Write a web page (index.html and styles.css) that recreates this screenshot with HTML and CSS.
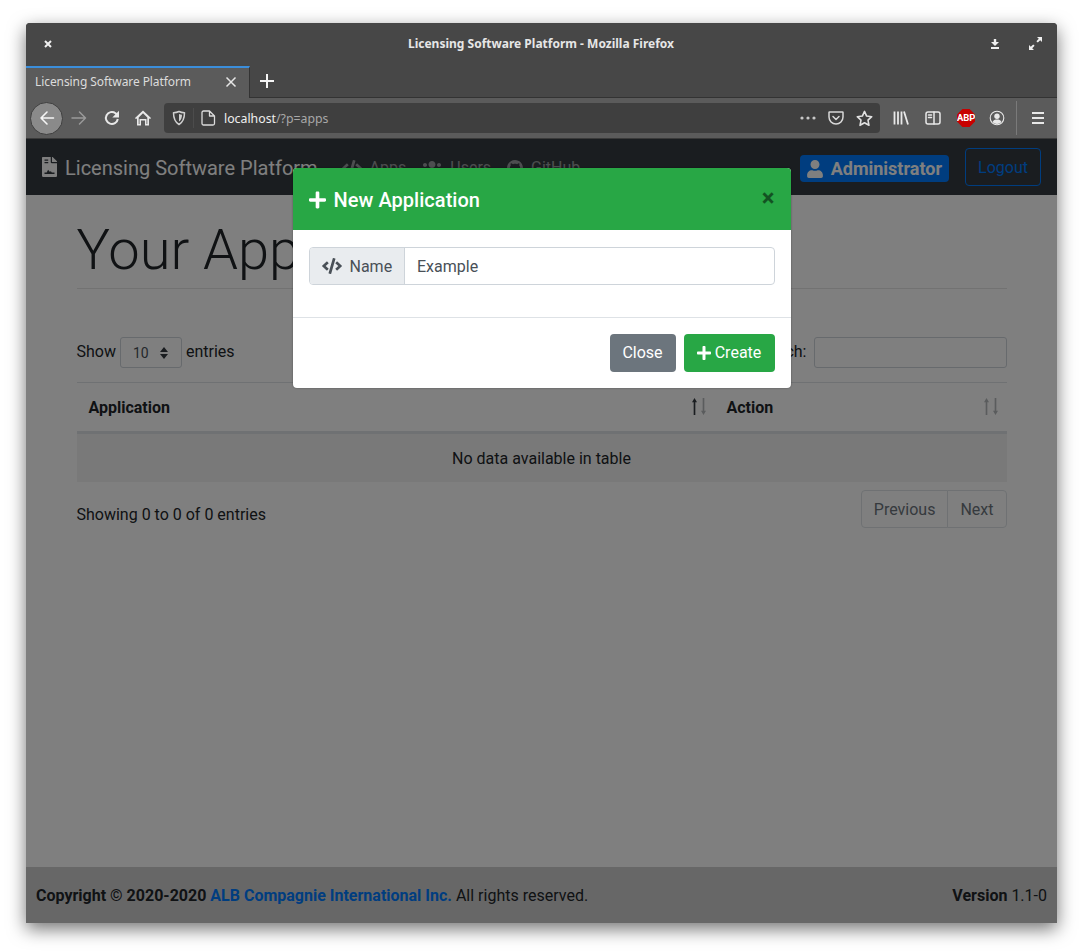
FILE: index.html
```html
<!DOCTYPE html>
<html lang="en">
<head>
<meta charset="utf-8">
<title>Licensing Software Platform</title>
<link rel="stylesheet" href="styles.css">
</head>
<body>
<div class="window">
  <div class="titlebar">
    <svg class="wm-close" viewBox="0 0 10 10"><path d="M2 2l6 6M8 2l-6 6"/></svg>
    <div class="title-text">Licensing Software Platform - Mozilla Firefox</div>
    <div class="wm-right">
      <svg class="wm-icon" viewBox="0 0 10 10"><path d="M3.800 0h2.400v3H9L5 7 1 3h2.800zM1 8h8v2H1z"/></svg>
      <svg class="wm-icon wm-max" viewBox="0 0 13 13"><path d="M8 0h5v5l-1.800-1.800-2.400 2.400-1.400-1.400 2.400-2.400zM5 13H0V8l1.800 1.800 2.400-2.400 1.400 1.400-2.400 2.400z"/></svg>
    </div>
  </div>
  <div class="tabstrip">
    <div class="tab">
      <span class="tab-label">Licensing Software Platform</span>
      <svg class="tab-close" viewBox="0 0 12 12"><path d="M1.500 1.500l9 9M10.500 1.500l-9 9"/></svg>
    </div>
    <svg class="tab-new" viewBox="0 0 14 14"><path d="M7 0v14M0 7h14"/></svg>
  </div>
  <div class="toolbar">
    <div class="back-btn"><svg class="tb-icon" viewBox="0 0 16 16"><path d="M14.500 8H2M8 2L2 8l6 6"/></svg></div>
    <svg class="tb-icon forward" viewBox="0 0 16 16"><path d="M1 8h13.500M8.500 2L14.500 8l-6 6"/></svg>
    <svg class="tb-icon reload" viewBox="0 0 16 16"><path d="M13.800 9A6 6 0 1 1 11.500 3.200L13.500 5.500"/><path class="solid" d="M15 0.800v6.700H8.300z"/></svg>
    <svg class="tb-icon home" viewBox="0 0 16 16"><path class="solid" d="M8 .5l8 7.500-1 1.200-1-.9V15.500h-4V10.500H6V15.500H2V8.300l-1 .9L0 8zM8 3.300L3.700 7.400V14H4.500V9h7V14h.8V7.400z"/></svg>
    <div class="urlbar">
      <svg class="tb-icon shield" viewBox="0 0 16 16"><path d="M8 1.500c2 1 4 1.200 5.500 1.200 0 5-1 9-5.500 11.800C3.500 11.700 2.500 7.700 2.500 2.700 4 2.700 6 2.500 8 1.500z"/><path class="solid" d="M8 4c1 .5 2 .6 3 .7 0 3-.6 5-3 6.800z"/></svg>
      <span class="url-sep"></span>
      <svg class="tb-icon page-ic" viewBox="0 0 16 16"><path d="M2 2.500a1.500 1.500 0 0 1 1.500-1.500H9.500L14.500 6v7.500a1.500 1.500 0 0 1-1.500 1.500H3.500A1.500 1.500 0 0 1 2 13.500zM9.500 1v5h5"/></svg>
      <span class="url"><span class="url-host">localhost</span>/?p=apps</span>
      <span class="url-spacer"></span>
      <svg class="tb-dots" viewBox="0 0 16 4"><circle cx="2" cy="2" r="1.600"/><circle cx="8" cy="2" r="1.600"/><circle cx="14" cy="2" r="1.600"/></svg>
      <svg class="tb-icon pocket" viewBox="0 0 16 16"><path d="M1.500 2h13a.5.500 0 0 1 .5.500V7A7 7 0 0 1 1 7V2.500a.5.500 0 0 1 .5-.5zM5 6.500l3 3 3-3"/></svg>
      <svg class="tb-icon star" viewBox="0 0 16 16"><path d="M8 1.300l2 4.400 4.800.6-3.500 3.300.9 4.800L8 12l-4.200 2.400.9-4.800L1.200 6.300 6 5.700z"/></svg>
    </div>
    <svg class="tb-icon library" viewBox="0 0 16 16"><path d="M1.500 1.500v13M5 1.500v13M8.500 1.500v13M11 1.500l4 13"/></svg>
    <svg class="tb-icon sidebar" viewBox="0 0 16 16"><rect x="1" y="2" width="14" height="12" rx="2"/><path d="M9 2v12M3.500 5h3M3.500 7.500h3"/></svg>
    <div class="abp">ABP</div>
    <svg class="tb-icon account" viewBox="0 0 16 16"><circle cx="8" cy="8" r="6.800"/><circle class="solid" cx="8" cy="6.200" r="2.700"/><path class="solid" d="M3.500 12c1-2 2.500-2.500 4.500-2.500s3.500.5 4.500 2.500c-1 1.300-2.700 2-4.500 2s-3.500-.7-4.500-2z"/></svg>
    <span class="tb-sep"></span>
    <svg class="tb-icon menu" viewBox="0 0 16 16"><path d="M2 3h12M2 8h12M2 13h12"/></svg>
  </div>
  <div class="page">
    <nav class="navbar">
      <a class="brand">
        <svg class="fa brand-ic" viewBox="0 0 384 512"><path fill-rule="evenodd" d="M224 136V0H24C10.700 0 0 10.700 0 24v464c0 13.300 10.700 24 24 24h336c13.300 0 24-10.700 24-24V160H248c-13.200 0-24-10.800-24-24zM64 72c0-4.400 3.600-8 8-8h80c4.400 0 8 3.600 8 8v16c0 4.400-3.600 8-8 8H72c-4.400 0-8-3.600-8-8zm0 64c0-4.400 3.600-8 8-8h80c4.400 0 8 3.600 8 8v16c0 4.400-3.600 8-8 8H72c-4.400 0-8-3.600-8-8zm256 296H64v-36h56l36-72 40 56 32-14 24 30h68zM377 105L279 7c-4.500-4.500-10.600-7-17-7h-6v128h128v-6.100c0-6.300-2.500-12.400-7-16.900z"/></svg>
        <span>Licensing Software Platform</span>
      </a>
      <ul class="nav-links">
        <li><svg class="fa ic-code" viewBox="0 0 640 512"><path d="M278.900 511.500l-61-17.700c-6.400-1.800-10-8.500-8.200-14.900L346.200 8.700c1.800-6.400 8.500-10 14.900-8.200l61 17.700c6.400 1.800 10 8.500 8.200 14.900L293.800 503.300c-1.900 6.400-8.500 10.100-14.900 8.200zm-114-112.200l43.500-46.400c4.600-4.900 4.300-12.700-.8-17.200L117 256l90.600-79.700c5.100-4.500 5.500-12.300.8-17.200l-43.500-46.400c-4.500-4.800-12.100-5.100-17-.5L3.800 247.200c-5.100 4.700-5.100 12.800 0 17.500l144.100 135.100c4.900 4.600 12.500 4.400 17-.5zm327.200.6l144.100-135.100c5.100-4.700 5.100-12.800 0-17.500L492.100 112.100c-4.800-4.500-12.400-4.300-17 .5L431.600 159c-4.600 4.900-4.300 12.700.8 17.200L523 256l-90.600 79.700c-5.100 4.500-5.500 12.300-.8 17.200l43.500 46.400c4.500 4.900 12.100 5.100 17 .6z"/></svg>Apps</li>
        <li><svg class="fa ic-code" viewBox="0 0 640 512"><path d="M96 224c35.300 0 64-28.700 64-64s-28.700-64-64-64-64 28.700-64 64 28.700 64 64 64zm448 0c35.300 0 64-28.700 64-64s-28.700-64-64-64-64 28.700-64 64 28.700 64 64 64zm32 32h-64c-17.600 0-33.500 7.100-45.100 18.600 40.300 22.100 68.900 62 75.100 109.400h66c17.700 0 32-14.300 32-32v-32c0-35.300-28.700-64-64-64zm-256 0c61.900 0 112-50.100 112-112S381.900 32 320 32 208 82.100 208 144s50.100 112 112 112zm76.800 32h-8.300c-20.800 10-43.900 16-68.500 16s-47.600-6-68.500-16h-8.300C179.600 288 128 339.600 128 403.200V432c0 26.500 21.500 48 48 48h288c26.500 0 48-21.500 48-48v-28.800c0-63.600-51.600-115.200-115.200-115.200zm-223.700-13.400C161.500 263.100 145.600 256 128 256H64c-35.300 0-64 28.700-64 64v32c0 17.700 14.300 32 32 32h65.900c6.300-47.400 34.900-87.300 75.200-109.400z"/></svg>Users</li>
        <li><svg class="fa ic-github" viewBox="0 0 16 16"><path d="M8 0C3.580 0 0 3.580 0 8c0 3.540 2.290 6.530 5.470 7.590.4.070.55-.17.55-.38 0-.19-.01-.82-.01-1.490-2.010.37-2.530-.49-2.690-.94-.09-.23-.48-.94-.82-1.130-.28-.15-.68-.52-.01-.53.63-.01 1.080.58 1.230.82.72 1.210 1.870.87 2.330.66.07-.52.28-.87.51-1.070-1.780-.2-3.640-.89-3.640-3.950 0-.87.31-1.590.82-2.150-.08-.2-.36-1.020.08-2.120 0 0 .67-.21 2.200.82.64-.18 1.320-.27 2-.27.68 0 1.360.09 2 .27 1.530-1.040 2.200-.82 2.200-.82.44 1.100.16 1.920.08 2.120.51.56.82 1.270.82 2.150 0 3.070-1.870 3.750-3.650 3.950.29.25.54.73.54 1.480 0 1.070-.01 1.930-.01 2.200 0 .21.15.46.55.38A8.013 8.013 0 0016 8c0-4.420-3.580-8-8-8z"/></svg>GitHub</li>
      </ul>
      <div class="nav-right">
        <span class="user-badge"><svg class="fa ic-user" viewBox="0 0 448 512"><path d="M224 256c70.700 0 128-57.300 128-128S294.700 0 224 0 96 57.300 96 128s57.300 128 128 128zm89.600 32h-16.700c-22.200 10.200-46.900 16-72.900 16s-50.600-5.800-72.900-16h-16.700C60.200 288 0 348.200 0 422.400V464c0 26.500 21.500 48 48 48h352c26.500 0 48-21.500 48-48v-41.600c0-74.200-60.200-134.400-134.400-134.400z"/></svg>Administrator</span>
        <button class="btn-logout">Logout</button>
      </div>
    </nav>
    <main class="content">
      <h1 class="page-title">Your Applications</h1>
      <hr class="rule">
      <div class="dt-top">
        <label class="dt-length"><span class="dt-word">Show</span><span class="fake-select"><span class="sel-val">10</span><svg class="updown" viewBox="0 0 8 12"><path d="M4 0l4 5H0zM4 12L0 7h8z"/></svg></span><span class="dt-word">entries</span></label>
        <label class="dt-search"><span class="dt-word">Search:</span><span class="fake-input"></span></label>
      </div>
      <table class="dt">
        <thead>
          <tr>
            <th class="col-a"><div class="th-inner"><span class="nudge">Application</span><span class="sort"><svg viewBox="0 0 6 16" preserveAspectRatio="none"><path class="on" d="M3 0l3 4H4v12H2V4H0z"/></svg><svg viewBox="0 0 6 16" preserveAspectRatio="none"><path class="off" d="M3 16l3-4H4V0H2v12H0z"/></svg></span></div></th>
            <th class="col-b"><div class="th-inner"><span class="nudge">Action</span><span class="sort"><svg viewBox="0 0 6 16" preserveAspectRatio="none"><path class="off" d="M3 0l3 4H4v12H2V4H0z"/></svg><svg viewBox="0 0 6 16" preserveAspectRatio="none"><path class="off" d="M3 16l3-4H4V0H2v12H0z"/></svg></span></div></th>
          </tr>
        </thead>
        <tbody>
          <tr><td colspan="2"><span class="nudge">No data available in table</span></td></tr>
        </tbody>
      </table>
      <div class="dt-bottom">
        <div class="dt-info">Showing 0 to 0 of 0 entries</div>
        <div class="pager"><span class="page-btn">Previous</span><span class="page-btn">Next</span></div>
      </div>
    </main>
    <footer class="footer">
      <div><b>Copyright © 2020-2020 <a class="foot-link">ALB Compagnie International Inc.</a></b> All rights reserved.</div>
      <div><b>Version</b> 1.1-0</div>
    </footer>
    <div class="backdrop">
      <div class="modal">
        <div class="modal-head">
          <h5 class="modal-title"><svg class="fa ic-plus" viewBox="0 0 448 512"><path d="M416 208H272V64c0-17.670-14.330-32-32-32h-32c-17.670 0-32 14.330-32 32v144H32c-17.670 0-32 14.330-32 32v32c0 17.670 14.330 32 32 32h144v144c0 17.670 14.330 32 32 32h32c17.670 0 32-14.330 32-32V304h144c17.670 0 32-14.330 32-32v-32c0-17.670-14.330-32-32-32z"/></svg>New Application</h5>
          <span class="modal-x">×</span>
        </div>
        <div class="modal-body">
          <div class="input-group">
            <span class="prepend"><svg class="fa ic-name" viewBox="0 0 640 512"><path d="M278.900 511.500l-61-17.700c-6.400-1.800-10-8.500-8.200-14.900L346.200 8.700c1.800-6.400 8.500-10 14.900-8.200l61 17.700c6.400 1.800 10 8.500 8.200 14.900L293.800 503.300c-1.900 6.400-8.500 10.100-14.900 8.200zm-114-112.200l43.500-46.400c4.600-4.900 4.300-12.700-.8-17.200L117 256l90.600-79.700c5.100-4.500 5.500-12.300.8-17.200l-43.500-46.400c-4.500-4.800-12.100-5.100-17-.5L3.800 247.200c-5.100 4.700-5.100 12.800 0 17.500l144.100 135.100c4.900 4.600 12.500 4.400 17-.5zm327.200.6l144.100-135.100c5.100-4.700 5.100-12.800 0-17.500L492.100 112.100c-4.800-4.500-12.400-4.300-17 .5L431.600 159c-4.600 4.900-4.300 12.700.8 17.200L523 256l-90.600 79.700c-5.100 4.500-5.500 12.300-.8 17.200l43.500 46.400c4.500 4.900 12.100 5.100 17 .6z"/></svg><span class="nudge">Name</span></span>
            <span class="name-input">Example</span>
          </div>
        </div>
        <div class="modal-foot">
          <button class="btn btn-grey">Close</button>
          <button class="btn btn-green"><svg class="fa ic-btnplus" viewBox="0 0 448 512"><path d="M416 208H272V64c0-17.670-14.330-32-32-32h-32c-17.670 0-32 14.330-32 32v144H32c-17.670 0-32 14.330-32 32v32c0 17.670 14.330 32 32 32h144v144c0 17.670 14.330 32 32 32h32c17.670 0 32-14.330 32-32V304h144c17.670 0 32-14.330 32-32v-32c0-17.670-14.330-32-32-32z"/></svg>Create</button>
        </div>
      </div>
    </div>
  </div>
</div>
</body>
</html>
```
FILE: styles.css
```css
* { box-sizing: border-box; }
html, body { margin: 0; height: 100%; background: #fff; overflow: hidden; }
body { padding: 23px 26px 29px; font-family: Roboto, "Liberation Sans", sans-serif; font-size: 16px; line-height: 1.5; color: #212529; }

.window { height: 900px; display: flex; flex-direction: column; border-radius: 4px 4px 0 0; overflow: hidden; box-shadow: 0 6px 18px rgba(0,0,0,.55); background: #474747; }

.titlebar { height: 43px; flex: none; display: flex; align-items: center; padding: 0 15px 2px 16px; background: #474747; }
.wm-close { width: 10px; height: 10px; margin-left: 1px; fill: none; stroke: #f0f0f0; stroke-width: 2; }
.title-text { flex: 1; text-align: center; color: #e6e6e6; font: 700 12px/16px "Noto Sans", sans-serif; padding-left: 39px; }
.wm-right { display: flex; align-items: center; gap: 29px; }
.wm-icon { width: 10px; height: 10px; fill: #f0f0f0; }
.wm-max { width: 13px; height: 13px; }

.tabstrip { height: 32px; flex: none; display: flex; align-items: center; background: #474747; border-bottom: 1px solid #333; }
.tab { width: 224px; height: 32px; flex: none; display: flex; align-items: center; justify-content: space-between; padding: 0 12px 2px 9px; background: #5b5b5b; border-top: 2px solid #3b8edb; border-right: 1px solid #333; }
.tab-label { color: #dcdcdc; font: 400 12px/16px "Noto Sans", sans-serif; white-space: nowrap; letter-spacing: -.08px; }
.tab-close { width: 12px; height: 12px; fill: none; stroke: #e6e6e6; stroke-width: 1.500; }
.tab-new { width: 14px; height: 14px; margin: 0 0 2px 10px; fill: none; stroke: #f5f5f5; stroke-width: 2; }

.toolbar { height: 41px; flex: none; display: flex; align-items: center; background: #5b5b5b; border-bottom: 1px solid #3a3a3a; padding-left: 4px; }
.tb-icon { width: 16px; height: 16px; flex: none; fill: none; stroke: #e8e8e8; stroke-width: 1.500; stroke-linejoin: round; stroke-linecap: round; }
.tb-icon .solid { fill: #e8e8e8; stroke: none; }
.back-btn { width: 33px; height: 33px; flex: none; border-radius: 50%; background: #8a8a8a; border: 1px solid #3f3f3f; display: flex; align-items: center; justify-content: center; }
.back-btn .tb-icon { width: 16px; height: 16px; stroke: #f5f5f5; stroke-width: 1.600; }
.forward { margin-left: 8px; stroke: #9a9a9a; }
.reload { margin-left: 17px; stroke-width: 2; stroke-linecap: butt; }
.home { margin-left: 15px; }
.urlbar { width: 716px; height: 30px; flex: none; margin-left: 13px; background: #3f3f3f; border-radius: 4px; display: flex; align-items: center; padding: 0 7px; }
.shield { stroke: #d0d0d0; }
.shield .solid { fill: #d0d0d0; }
.url-sep { width: 1px; height: 20px; background: #4c4c4c; margin: 0 6px 0 6px; }
.page-ic { stroke: #dcdcdc; stroke-width: 1.300; }
.url { margin-left: 8px; padding-top: 2px; color: #a8a8a8; font: 400 12.300px/16px "Noto Sans", sans-serif; }
.url-host { color: #efefef; }
.url-spacer { flex: 1; }
.tb-dots { width: 16px; height: 4px; fill: #c8c8c8; margin-right: 12px; }
.pocket { stroke: #d8d8d8; margin-right: 12px; }
.star { stroke: #e0e0e0; width: 17px; height: 17px; }
.library { margin-left: 13px; stroke-linecap: butt; stroke-width: 1.800; }
.sidebar { margin-left: 16px; stroke-width: 1.500; }
.abp { width: 18px; height: 18px; flex: none; margin-left: 16px; background: #c80000; color: #fff; font: 700 9.500px/18px Roboto, sans-serif; text-align: center; letter-spacing: -.1px; clip-path: polygon(30% 0, 70% 0, 100% 30%, 100% 70%, 70% 100%, 30% 100%, 0 70%, 0 30%); }
.account { margin-left: 14px; stroke-width: 1.100; }
.tb-sep { width: 1px; height: 34px; background: #7a7a7a; margin-left: 11px; }
.menu { margin-left: 13px; stroke-linecap: butt; stroke-width: 1.800; }

.page { flex: 1; min-height: 0; position: relative; display: flex; flex-direction: column; background: #fff; }

.navbar { height: 56px; flex: none; display: flex; align-items: center; padding: 0 16px; background: #343a40; }
.fa { fill: currentColor; flex: none; display: block; }
.brand { display: flex; align-items: center; color: #fff; font-size: 20px; line-height: 30px; white-space: nowrap; }
.brand span { padding-top: 2px; }
.brand-ic { width: 15px; height: 20px; margin-right: 8px; }
.nav-links { list-style: none; display: flex; margin: 0 0 0 24px; padding: 2px 0 0; color: rgba(255,255,255,.5); }
.nav-links li { display: flex; align-items: center; margin-right: 16px; }
.ic-code { width: 20px; height: 16px; margin-right: 8px; }
.ic-github { width: 16px; height: 16px; margin-right: 8px; }
.nav-right { margin-left: auto; display: flex; align-items: center; gap: 16px; }
.user-badge { display: flex; align-items: center; height: 27px; margin-top: 3px; padding: 0 7px; border-radius: 4px; background: #007bff; color: #fff; font-size: 18px; font-weight: 700; }
.ic-user { width: 16px; height: 18px; margin-right: 8px; }
.btn-logout { height: 38px; width: 76px; padding: 2px 0 0; background: transparent; border: 1px solid #007bff; border-radius: 4px; color: #007bff; font: inherit; }

.content { flex: 1; min-height: 0; width: 960px; margin: 0 auto; padding: 0 15px; }
.page-title { margin: 22px 0 0; font-size: 56px; font-weight: 300; line-height: 67px; color: #212529; }
.rule { margin: 4px 0 0; border: 0; border-top: 1px solid rgba(0,0,0,.1); }

.dt-top { display: flex; justify-content: space-between; align-items: center; margin-top: 48px; height: 31px; }
.dt-length, .dt-search { display: flex; align-items: center; white-space: nowrap; }
.dt-word { margin-top: -2px; }
.fake-select { width: 62px; height: 31px; margin: 0 4px; padding: 0 13px 0 12px; display: flex; align-items: center; justify-content: space-between; border: 1px solid #ced4da; border-radius: 3px; font-size: 14px; color: #495057; background: #fff; }
.sel-val { padding-top: 2px; }
.updown { width: 8px; height: 12px; fill: #343a40; }
.fake-input { display: block; width: 193px; height: 31px; margin-left: 7px; border: 1px solid #ced4da; border-radius: 3px; background: #fff; }

.dt { width: 100%; margin-top: 14px; border-collapse: collapse; table-layout: fixed; }
.dt th { height: 50px; padding: 0 12px; text-align: left; font-weight: 700; border-top: 1px solid #dee2e6; border-bottom: 3px solid #dee2e6; }
.col-a { width: 638px; }
.th-inner { display: flex; align-items: center; justify-content: space-between; }
.nudge { position: relative; top: 1px; }
.sort { display: flex; gap: 4px; margin-right: -3px; margin-top: -2px; }
.sort svg { width: 5px; height: 17px; display: block; }
.sort .on { fill: #343a40; }
.sort .off { fill: #b5b8bb; }
.dt td { height: 49px; padding: 0; text-align: center; background: #f2f2f2; }

.dt-bottom { display: flex; justify-content: space-between; margin-top: 8px; }
.dt-info { padding-top: 13px; }
.pager { display: flex; color: #6c757d; }
.page-btn { height: 38px; padding: 7px 12px 5px; border: 1px solid #dee2e6; background: #fff; }
.page-btn:first-child { border-radius: 4px 0 0 4px; }
.page-btn:last-child { margin-left: -1px; border-radius: 0 4px 4px 0; }

.footer { height: 56px; flex: none; display: flex; align-items: center; justify-content: space-between; padding: 2px 10px 0; background: #cfcfcf; }
.foot-link { color: #007bff; }

.backdrop { position: absolute; inset: 0; background: rgba(0,0,0,.5); }
.modal { width: 498px; height: 220px; margin: 29px auto 0; background: #fff; border-radius: 4px; display: flex; flex-direction: column; overflow: hidden; box-shadow: 0 0 2px rgba(0,0,0,.4); }
.modal-head { height: 62px; flex: none; display: flex; align-items: center; justify-content: space-between; padding: 0 16px; background: #28a745; color: #fff; }
.modal-title { display: flex; align-items: center; margin: 2px 0 0; font-size: 20px; font-weight: 500; line-height: 30px; letter-spacing: .04px; }
.ic-plus { width: 17px; height: 20px; margin-right: 8px; }
.modal-x { font-size: 24px; font-weight: 700; line-height: 24px; color: #000; opacity: .5; margin-top: -2px; }
.modal-body { height: 87px; flex: none; padding: 17px 16px 0; }
.input-group { display: flex; height: 38px; border: 1px solid #ced4da; border-radius: 4px; overflow: hidden; color: #495057; }
.prepend { width: 95px; flex: none; display: flex; align-items: center; padding-left: 12px; background: #e9ecef; border-right: 1px solid #ced4da; }
.ic-name { width: 20px; height: 16px; margin-right: 8px; }
.name-input { flex: 1; padding: 7px 12.500px 5px; }
.modal-foot { flex: 1; display: flex; justify-content: flex-end; align-items: flex-start; gap: 8px; padding: 16px 16px 0; border-top: 1px solid #dee2e6; }
.btn { height: 38px; display: flex; align-items: center; justify-content: center; padding: 0; border: 0; border-radius: 4px; color: #fff; font: inherit; }
.btn-grey { width: 66px; background: #6c757d; }
.btn-green { width: 91px; background: #28a745; }
.ic-btnplus { width: 14px; height: 16px; margin-right: 4px; }
```
